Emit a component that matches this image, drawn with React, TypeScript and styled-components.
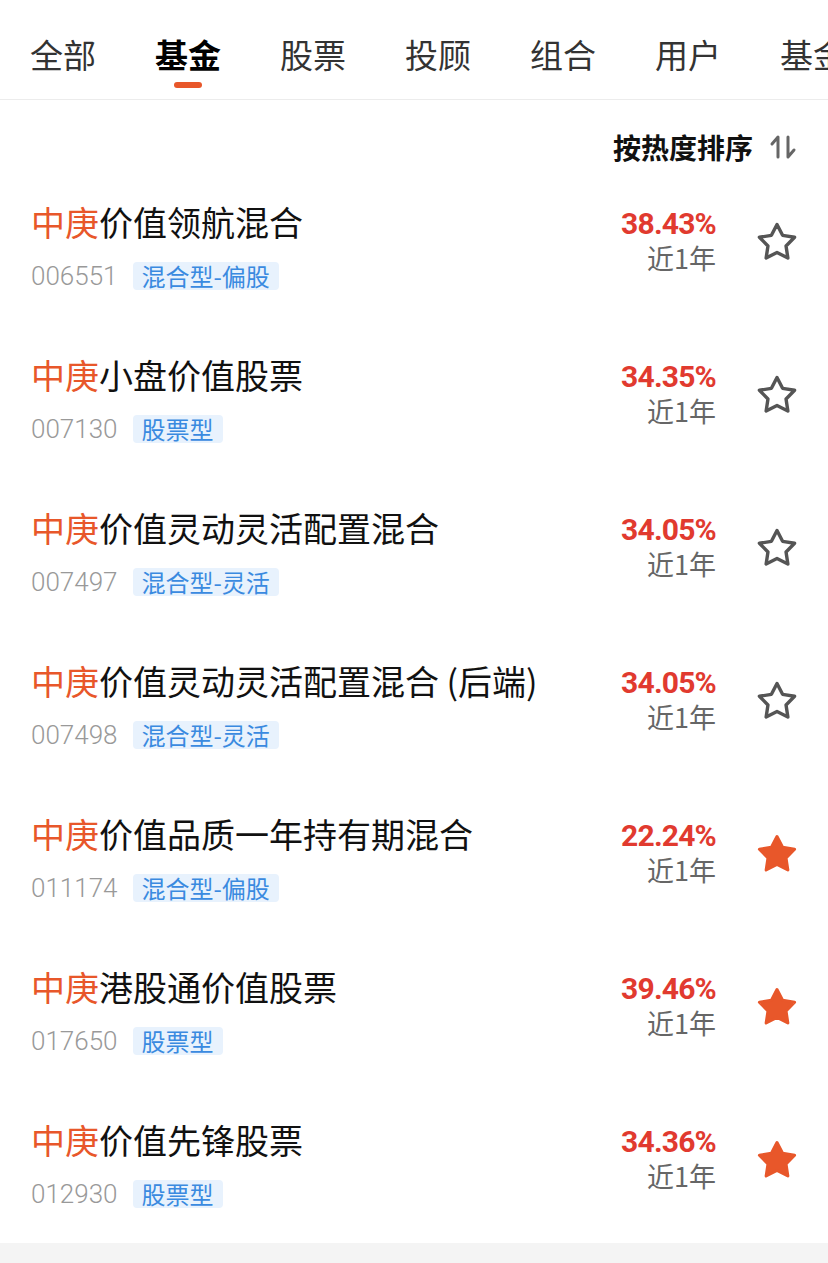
import React from 'react'
import styled, { createGlobalStyle } from 'styled-components'

const GlobalStyle = createGlobalStyle`
  html, body {
    margin: 0;
    padding: 0;
    background: #fff;
  }
  body {
    font-family: "Noto Sans CJK SC", "Noto Sans", sans-serif;
    -webkit-font-smoothing: antialiased;
  }
`

const ORANGE = '#e8572a'
const RED = '#e13a2f'

const funds = [
  { name: '价值领航混合', code: '006551', tag: '混合型-偏股', rate: '38.43%', fav: false },
  { name: '小盘价值股票', code: '007130', tag: '股票型', rate: '34.35%', fav: false },
  { name: '价值灵动灵活配置混合', code: '007497', tag: '混合型-灵活', rate: '34.05%', fav: false },
  { name: '价值灵动灵活配置混合 (后端)', code: '007498', tag: '混合型-灵活', rate: '34.05%', fav: false },
  { name: '价值品质一年持有期混合', code: '011174', tag: '混合型-偏股', rate: '22.24%', fav: true },
  { name: '港股通价值股票', code: '017650', tag: '股票型', rate: '39.46%', fav: true },
  { name: '价值先锋股票', code: '012930', tag: '股票型', rate: '34.36%', fav: true },
]

const tabs = ['全部', '基金', '股票', '投顾', '组合', '用户', '基金经理']

const Page = styled.div`
  width: 828px;
  min-height: 1263px;
  display: flex;
  flex-direction: column;
  overflow: hidden;
`

const TabBar = styled.div`
  height: 99px;
  border-bottom: 1px solid #ececec;
  display: flex;
  gap: 59px;
  padding-left: 30px;
  white-space: nowrap;
  overflow: hidden;
`

const Tab = styled.div<{ $active?: boolean }>`
  position: relative;
  flex: none;
  font-size: 33px;
  line-height: 40px;
  padding-top: 34px;
  color: ${(p) => (p.$active ? '#000' : '#333')};
  font-weight: ${(p) => (p.$active ? 700 : 400)};

  &::after {
    content: '';
    display: ${(p) => (p.$active ? 'block' : 'none')};
    position: absolute;
    left: 50%;
    top: 82px;
    width: 28px;
    height: 6px;
    margin-left: -14px;
    border-radius: 3px;
    background: ${ORANGE};
  }
`

const SortBar = styled.div`
  height: 72px;
  box-sizing: border-box;
  padding: 30px 31px 0 0;
  display: flex;
  justify-content: flex-end;
  align-items: flex-start;
  gap: 16px;
`

const SortLabel = styled.div`
  font-size: 28px;
  line-height: 34px;
  font-weight: 700;
  color: #111;
`

const SortIcon = styled.svg`
  margin-top: 4px;
`

const List = styled.div`
  display: flex;
  flex-direction: column;
`

const Row = styled.div`
  height: 153px;
  box-sizing: border-box;
  padding: 0 31px;
  display: flex;
  align-items: flex-start;
`

const Info = styled.div`
  flex: 1;
  padding-top: 28px;
  min-width: 0;
`

const Title = styled.div`
  font-size: 34px;
  line-height: 44px;
  color: #111;
  white-space: nowrap;
`

const Brand = styled.span`
  color: ${ORANGE};
`

const Meta = styled.div`
  margin-top: 18px;
  display: flex;
  align-items: center;
  gap: 15px;
`

const Code = styled.span`
  font-family: Roboto, "Liberation Sans", sans-serif;
  font-weight: 300;
  font-size: 26px;
  line-height: 28px;
  color: #999;
`

const Tag = styled.span`
  height: 28px;
  line-height: 28px;
  padding: 0 9px;
  border-radius: 4px;
  background: #e8f2fd;
  color: #3a8ae0;
  font-size: 24px;
`

const Yield = styled.div`
  margin-top: 37px;
  display: flex;
  flex-direction: column;
  align-items: flex-end;
`

const Rate = styled.div`
  font-family: Roboto, "Liberation Sans", sans-serif;
  font-weight: 700;
  font-size: 30px;
  letter-spacing: -0.8px;
  line-height: 30px;
`

const RateValue = styled.span`
  color: ${RED};
`

const Period = styled.div`
  margin-top: 3px;
  font-size: 27px;
  line-height: 32px;
  color: #666;
`

const StarIcon = styled.svg`
  flex: none;
  margin: 50px 0 0 41px;
`

const starPoints =
  '20,2.5 25.58,13.31 37.6,15.28 29.04,23.94 30.87,35.97 20,30.5 9.13,35.97 10.96,23.94 2.4,15.28 14.42,13.31'

const Star = ({ filled }: { filled: boolean }) => (
  <StarIcon width="40" height="40" viewBox="0 0 40 40">
    <polygon
      points={starPoints}
      fill={filled ? ORANGE : 'none'}
      stroke={filled ? ORANGE : '#555'}
      strokeWidth={filled ? 3 : 3.4}
      strokeLinejoin="round"
    />
  </StarIcon>
)

const Filler = styled.div`
  flex: 1;
  background: #f4f4f4;
`

export default function App() {
  return (
    <Page>
      <GlobalStyle />
      <TabBar>
        {tabs.map((t) => (
          <Tab key={t} $active={t === '基金'}>
            {t}
          </Tab>
        ))}
      </TabBar>
      <SortBar>
        <SortLabel>按热度排序</SortLabel>
        <SortIcon width="28" height="26" viewBox="0 0 28 26">
          <g fill="none" stroke="#666" strokeWidth="3" strokeLinecap="round" strokeLinejoin="round">
            <path d="M9 23 V3 L3 10" />
            <path d="M19 3 V23 L25 16" />
          </g>
        </SortIcon>
      </SortBar>
      <List>
        {funds.map((f) => (
          <Row key={f.code}>
            <Info>
              <Title>
                <Brand>中庚</Brand>
                {f.name}
              </Title>
              <Meta>
                <Code>{f.code}</Code>
                <Tag>{f.tag}</Tag>
              </Meta>
            </Info>
            <Yield>
              <Rate>
                <RateValue>{f.rate}</RateValue>
              </Rate>
              <Period>近1年</Period>
            </Yield>
            <Star filled={f.fav} />
          </Row>
        ))}
      </List>
      <Filler />
    </Page>
  )
}
